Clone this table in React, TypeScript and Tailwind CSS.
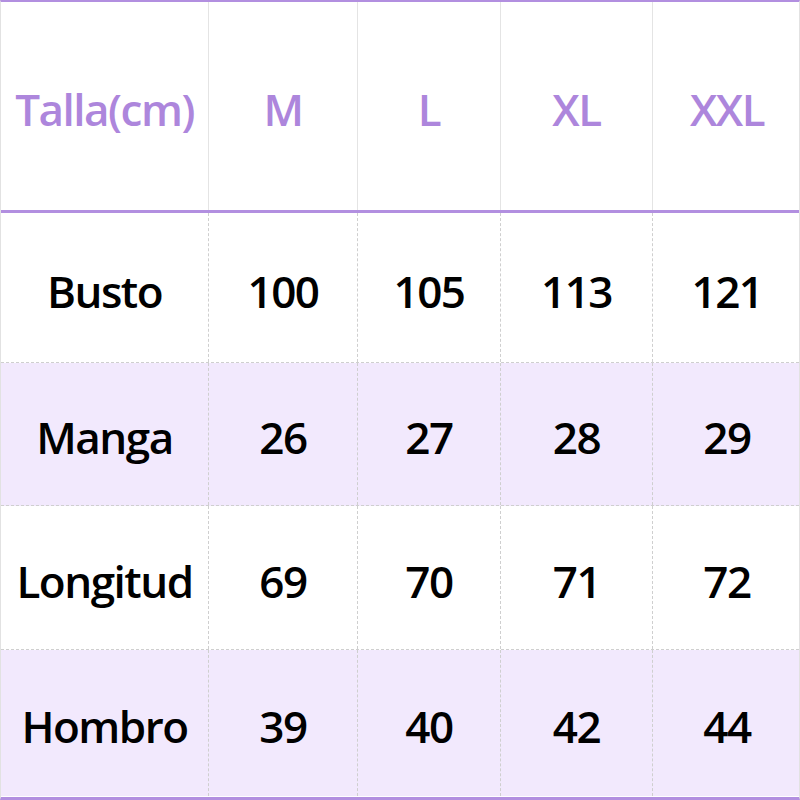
const headers = ["Talla(cm)", "M", "L", "XL", "XXL"];

const rows = [
  { name: "Busto", values: ["100", "105", "113", "121"], h: "h-[150px]", tint: false },
  { name: "Manga", values: ["26", "27", "28", "29"], h: "h-[143px]", tint: true },
  { name: "Longitud", values: ["69", "70", "71", "72"], h: "h-[144px]", tint: false },
  { name: "Hombro", values: ["39", "40", "42", "44"], h: "h-[146px]", tint: true },
];

const cols = "grid grid-cols-[208px_149px_143px_152px_148px]";

export default function App() {
  return (
    <div
      className="w-[800px] h-[800px] bg-white overflow-hidden border-t-2 border-b-[3px] border-[#b28fe0] border-x border-x-[#e2e2e2]"
      style={{ fontFamily: '"Open Sans", "Noto Sans", sans-serif' }}
    >
      <div className={`${cols} h-[211px] border-b-[3px] border-[#b28fe0]`}>
        {headers.map((h, i) => (
          <div
            key={h}
            className={`flex items-center justify-center pt-[6px] text-[44px] font-semibold tracking-[-1.5px] text-[#ad86dc] ${
              i < headers.length - 1 ? "border-r border-[#e4e4e4]" : ""
            }`}
          >
            {h}
          </div>
        ))}
      </div>

      {rows.map((row, r) => (
        <div
          key={row.name}
          className={`${cols} ${row.h} ${row.tint ? "bg-[#f2e9fd]" : "bg-white"} ${
            r < rows.length - 1 ? "border-b border-dashed border-[#cfcfcf]" : ""
          }`}
        >
          {[row.name, ...row.values].map((v, i) => (
            <div
              key={i}
              className={`flex items-center justify-center pt-[6px] text-[44px] font-semibold tracking-[-1.5px] text-black ${
                i < 4 ? "border-r border-dashed border-[#cfcfcf]" : ""
              }`}
            >
              {v}
            </div>
          ))}
        </div>
      ))}
    </div>
  );
}
